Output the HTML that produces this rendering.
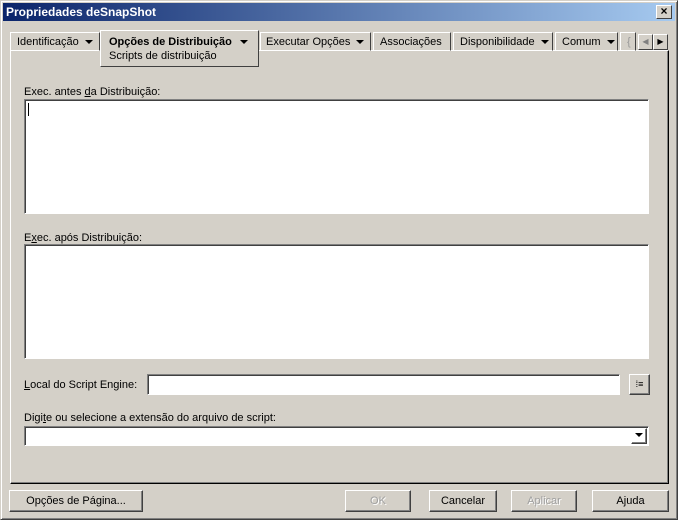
<!DOCTYPE html>
<html><head><meta charset="utf-8"><style>
*{box-sizing:border-box;margin:0;padding:0}
body{width:678px;height:520px;background:#d4d0c8;font-family:"Liberation Sans",Arial,sans-serif;font-size:11px;color:#000;position:relative;overflow:hidden}
.a{position:absolute}
.win{left:0;top:0;width:678px;height:520px;border:1px solid;border-color:#d4d0c8 #404040 #404040 #d4d0c8;box-shadow:inset 1px 1px #fff,inset -1px -1px #808080}
.title{left:3px;top:3px;width:672px;height:18px;background:linear-gradient(90deg,#0a246a,#a6caf0);color:#fff;font-weight:bold;font-size:12px;line-height:19px;padding-left:3px}
.x{left:656px;top:5px;width:16px;height:14px;background:#d4d0c8;border:1px solid;border-color:#fff #404040 #404040 #fff;font-size:12px;line-height:11px;text-align:center;font-weight:bold}
.tab{top:32px;height:19px;border:1px solid;border-color:#fff #404040 transparent #fff;line-height:18px;padding-left:6px;white-space:nowrap}
.tri{display:inline-block;width:0;height:0;border-left:4px solid transparent;border-right:4px solid transparent;border-top:4px solid #000;vertical-align:middle;margin-left:6px}
.panel{left:10px;top:50px;width:659px;height:434px;border:1px solid;border-color:#fff #000 #000 #fff;box-shadow:inset -1px -1px #808080}
.field{background:#fff;border:1px solid;border-color:#808080 #fff #fff #808080;box-shadow:inset 1px 1px #404040}
.btn{height:22px;border:1px solid;border-color:#fff #404040 #404040 #fff;box-shadow:inset -1px -1px #808080;text-align:center;line-height:20px}
.dis{color:#a0a0a0;text-shadow:1px 1px #fff}
u{text-decoration:underline}
</style></head><body>
<div class="a win"></div>
<div class="a title">Propriedades deSnapShot</div>
<div class="a x">×</div>

<div class="a panel"></div>
<div class="a tab" style="left:10px;width:90px">Identificação<span class="tri"></span></div>
<div class="a tab" style="left:260px;width:111px;padding-left:5px">Executar Opções<span class="tri"></span></div>
<div class="a tab" style="left:373px;width:78px">Associações</div>
<div class="a tab" style="left:453px;width:100px">Disponibilidade<span class="tri"></span></div>
<div class="a tab" style="left:555px;width:63px">Comum<span class="tri"></span></div>
<div class="a tab" style="left:620px;width:16px;color:#999">{</div>
<div class="a" style="left:638px;top:34px;width:15px;height:16px;border:1px solid;border-color:#fff #404040 #404040 #fff;font-size:8px;line-height:14px;text-align:center;color:#808080">◀</div>
<div class="a" style="left:653px;top:34px;width:15px;height:16px;border:1px solid;border-color:#fff #404040 #404040 #fff;font-size:8px;line-height:14px;text-align:center">▶</div>
<div class="a" style="left:100px;top:30px;width:159px;height:37px;background:#d4d0c8;border:1px solid;border-color:#fff #404040 #404040 #fff;padding:4px 0 0 8px;line-height:14px"><b>Opções de Distribuição</b><span class="tri" style="margin-left:8px"></span><br>Scripts de distribuição</div>

<div class="a" style="left:24px;top:86px">Exec. antes <u>d</u>a Distribuição:</div>
<div class="a field" style="left:24px;top:99px;width:625px;height:115px"><div class="a" style="left:3px;top:3px;width:1px;height:13px;background:#000"></div></div>
<div class="a" style="left:24px;top:232px">E<u>x</u>ec. após Distribuição:</div>
<div class="a field" style="left:24px;top:244px;width:625px;height:115px"></div>
<div class="a" style="left:24px;top:379px"><u>L</u>ocal do Script Engine:</div>
<div class="a field" style="left:147px;top:374px;width:473px;height:21px"></div>
<div class="a btn" style="left:629px;top:374px;width:21px;height:21px;font-size:9px;line-height:18px">⁞≡</div>
<div class="a" style="left:24px;top:412px">Digi<u>t</u>e ou selecione a extensão do arquivo de script:</div>
<div class="a field" style="left:24px;top:426px;width:625px;height:20px"><div class="a btn" style="right:1px;top:1px;width:16px;height:16px;line-height:12px"><span class="tri" style="margin:0"></span></div></div>

<div class="a btn" style="left:9px;top:490px;width:134px">Opções de Pá<u>g</u>ina...</div>
<div class="a btn dis" style="left:345px;top:490px;width:66px">OK</div>
<div class="a btn" style="left:429px;top:490px;width:68px">Cancelar</div>
<div class="a btn dis" style="left:511px;top:490px;width:66px">Aplicar</div>
<div class="a btn" style="left:592px;top:490px;width:77px">Ajuda</div>
</body></html>
